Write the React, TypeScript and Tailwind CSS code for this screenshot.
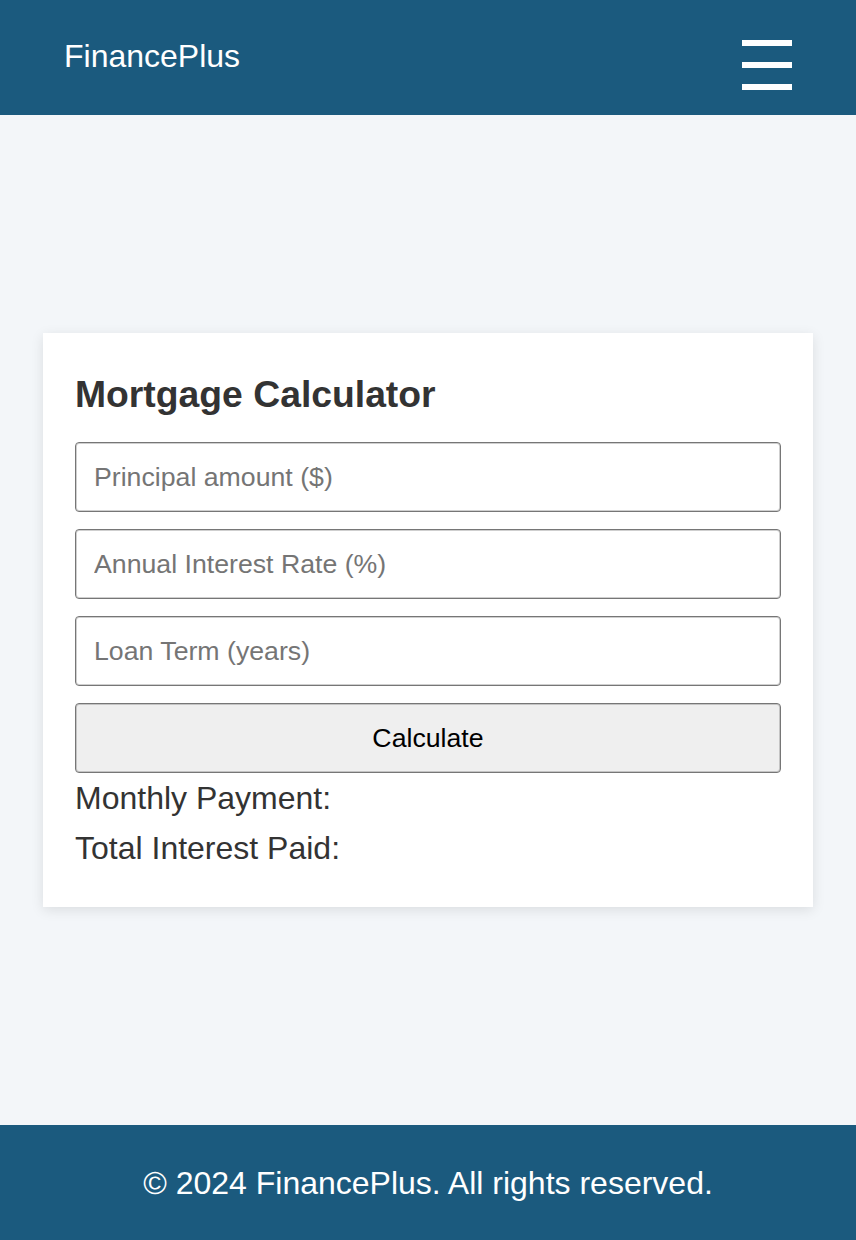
import React from 'react';

const font = { fontFamily: '"Liberation Sans", Arial, Helvetica, sans-serif' };

const fields = ['Principal amount ($)', 'Annual Interest Rate (%)', 'Loan Term (years)'];

export default function App() {
    return (
        <div className="flex h-[1240px] flex-col bg-[#f3f6f9]" style={font}>
            {/* Header */}
            <header className="flex h-[115px] shrink-0 items-center justify-between bg-[#1b5a7e] px-[64px]">
                <span className="mb-[3px] text-[32px] leading-none text-white">FinancePlus</span>
                <button className="mt-[15px] flex h-[50px] w-[50px] flex-col justify-between" aria-label="Menu">
                    <span className="block h-[6px] w-full bg-white" />
                    <span className="block h-[6px] w-full bg-white" />
                    <span className="block h-[6px] w-full bg-white" />
                </button>
            </header>

            {/* Main */}
            <main className="flex flex-1 items-center justify-center px-[43px]">
                <div className="w-full bg-white px-[32px] pb-[34px] pt-[32px] shadow-[0_3px_12px_rgba(0,0,0,0.1)]">
                    <h2 className="mb-[26px] mt-[8px] text-[37.3px] font-bold leading-[43px] text-[#333]">
                        Mortgage Calculator
                    </h2>
                    <div className="flex flex-col gap-[17px]">
                        {fields.map((f) => (
                            <input
                                key={f}
                                type="text"
                                placeholder={f}
                                className="h-[70px] w-full rounded-[4px] border border-[#767676] bg-white pl-[18px] text-[26.7px] text-black shadow-[inset_0_0_0_1px_rgba(118,118,118,0.35)] placeholder:text-[#757575] outline-none"
                                style={font}
                            />
                        ))}
                        <button
                            className="h-[70px] w-full rounded-[4px] border border-[#767676] bg-[#efefef] text-[26.7px] text-black shadow-[inset_0_0_0_1px_rgba(118,118,118,0.35)]"
                            style={font}
                        >
                            Calculate
                        </button>
                    </div>
                    <p className="text-[32px] leading-[50px] text-[#333]">Monthly Payment:</p>
                    <p className="text-[32px] leading-[50px] text-[#333]">Total Interest Paid:</p>
                </div>
            </main>

            {/* Footer */}
            <footer className="flex h-[115px] shrink-0 items-center justify-center bg-[#1b5a7e]">
                <p className="text-[32px] text-white">© 2024 FinancePlus. All rights reserved.</p>
            </footer>
        </div>
    );
}
